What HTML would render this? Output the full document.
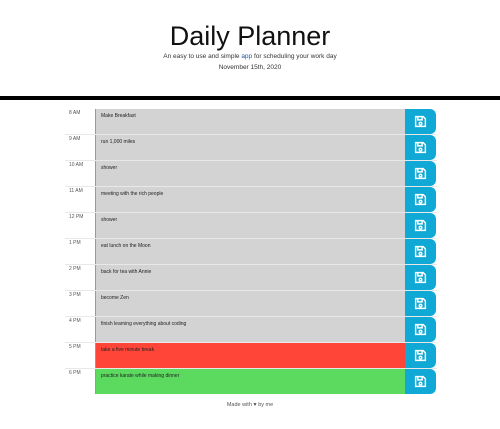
<!DOCTYPE html>
<html><head><meta charset="utf-8"><style>
body{margin:0;background:#fff;font-family:"Liberation Sans",sans-serif;color:#333;width:500px;height:429px;overflow:hidden}
.hdr{text-align:center}
h1{margin:0;padding-top:22px;font-weight:400;font-size:27px;line-height:28px;color:#111}
.sub{font-size:6.5px;margin-top:3px}
.sub b{font-weight:400;color:#1a5aa0}
.date{font-size:6.5px;margin-top:4px}
.bar{position:absolute;left:0;top:96px;width:500px;height:4px;background:#000}
.rows{position:absolute;left:65px;top:109px;width:372px}
.row{display:flex;height:26px;border-top:1px solid #e8e8e8;box-sizing:border-box}
.row:first-child{border-top:none;height:25px}
.h{width:30px;font-size:5px;color:#555;padding-left:4px;padding-top:1px;box-sizing:border-box}
.t{width:310px;background:#d3d3d3;border-left:1px solid #999;font-size:5px;padding:4px 5px;box-sizing:border-box;color:#222}
.r .t{background:#ff4538}.g .t{background:#5cd95f}
.b{width:31px;background:#10a8d4;border-radius:0 6px 6px 0;display:flex;align-items:center;justify-content:center}
.f{position:absolute;top:402px;left:0;width:500px;text-align:center;font-size:5.5px;color:#555}
</style></head><body>
<div class="hdr"><h1>Daily Planner</h1>
<div class="sub">An easy to use and simple <b>app</b> for scheduling your work day</div>
<div class="date">November 15th, 2020</div></div>
<div class="bar"></div>
<div class="rows">
<div class="row"><div class="h">8 AM</div><div class="t">Make Breakfast</div><div class="b"><svg width="13" height="13" viewBox="0 0 12 12" fill="none" stroke="#fff" stroke-width="1.3"><path d="M1.5 1.5h7l2 2v7h-9z"/><path d="M3.5 1.5v3h4v-3"/><circle cx="6" cy="8" r="1.2"/></svg></div></div>
<div class="row"><div class="h">9 AM</div><div class="t">run 1,000 miles</div><div class="b"><svg width="13" height="13" viewBox="0 0 12 12" fill="none" stroke="#fff" stroke-width="1.3"><path d="M1.5 1.5h7l2 2v7h-9z"/><path d="M3.5 1.5v3h4v-3"/><circle cx="6" cy="8" r="1.2"/></svg></div></div>
<div class="row"><div class="h">10 AM</div><div class="t">shower</div><div class="b"><svg width="13" height="13" viewBox="0 0 12 12" fill="none" stroke="#fff" stroke-width="1.3"><path d="M1.5 1.5h7l2 2v7h-9z"/><path d="M3.5 1.5v3h4v-3"/><circle cx="6" cy="8" r="1.2"/></svg></div></div>
<div class="row"><div class="h">11 AM</div><div class="t">meeting with the rich people</div><div class="b"><svg width="13" height="13" viewBox="0 0 12 12" fill="none" stroke="#fff" stroke-width="1.3"><path d="M1.5 1.5h7l2 2v7h-9z"/><path d="M3.5 1.5v3h4v-3"/><circle cx="6" cy="8" r="1.2"/></svg></div></div>
<div class="row"><div class="h">12 PM</div><div class="t">shower</div><div class="b"><svg width="13" height="13" viewBox="0 0 12 12" fill="none" stroke="#fff" stroke-width="1.3"><path d="M1.5 1.5h7l2 2v7h-9z"/><path d="M3.5 1.5v3h4v-3"/><circle cx="6" cy="8" r="1.2"/></svg></div></div>
<div class="row"><div class="h">1 PM</div><div class="t">eat lunch on the Moon</div><div class="b"><svg width="13" height="13" viewBox="0 0 12 12" fill="none" stroke="#fff" stroke-width="1.3"><path d="M1.5 1.5h7l2 2v7h-9z"/><path d="M3.5 1.5v3h4v-3"/><circle cx="6" cy="8" r="1.2"/></svg></div></div>
<div class="row"><div class="h">2 PM</div><div class="t">back for tea with Annie</div><div class="b"><svg width="13" height="13" viewBox="0 0 12 12" fill="none" stroke="#fff" stroke-width="1.3"><path d="M1.5 1.5h7l2 2v7h-9z"/><path d="M3.5 1.5v3h4v-3"/><circle cx="6" cy="8" r="1.2"/></svg></div></div>
<div class="row"><div class="h">3 PM</div><div class="t">become Zen</div><div class="b"><svg width="13" height="13" viewBox="0 0 12 12" fill="none" stroke="#fff" stroke-width="1.3"><path d="M1.5 1.5h7l2 2v7h-9z"/><path d="M3.5 1.5v3h4v-3"/><circle cx="6" cy="8" r="1.2"/></svg></div></div>
<div class="row"><div class="h">4 PM</div><div class="t">finish learning everything about coding</div><div class="b"><svg width="13" height="13" viewBox="0 0 12 12" fill="none" stroke="#fff" stroke-width="1.3"><path d="M1.5 1.5h7l2 2v7h-9z"/><path d="M3.5 1.5v3h4v-3"/><circle cx="6" cy="8" r="1.2"/></svg></div></div>
<div class="row r"><div class="h">5 PM</div><div class="t">take a five minute break</div><div class="b"><svg width="13" height="13" viewBox="0 0 12 12" fill="none" stroke="#fff" stroke-width="1.3"><path d="M1.5 1.5h7l2 2v7h-9z"/><path d="M3.5 1.5v3h4v-3"/><circle cx="6" cy="8" r="1.2"/></svg></div></div>
<div class="row g"><div class="h">6 PM</div><div class="t">practice karate while making dinner</div><div class="b"><svg width="13" height="13" viewBox="0 0 12 12" fill="none" stroke="#fff" stroke-width="1.3"><path d="M1.5 1.5h7l2 2v7h-9z"/><path d="M3.5 1.5v3h4v-3"/><circle cx="6" cy="8" r="1.2"/></svg></div></div>
</div>
<div class="f">Made with ♥ by me</div>
</body></html>
